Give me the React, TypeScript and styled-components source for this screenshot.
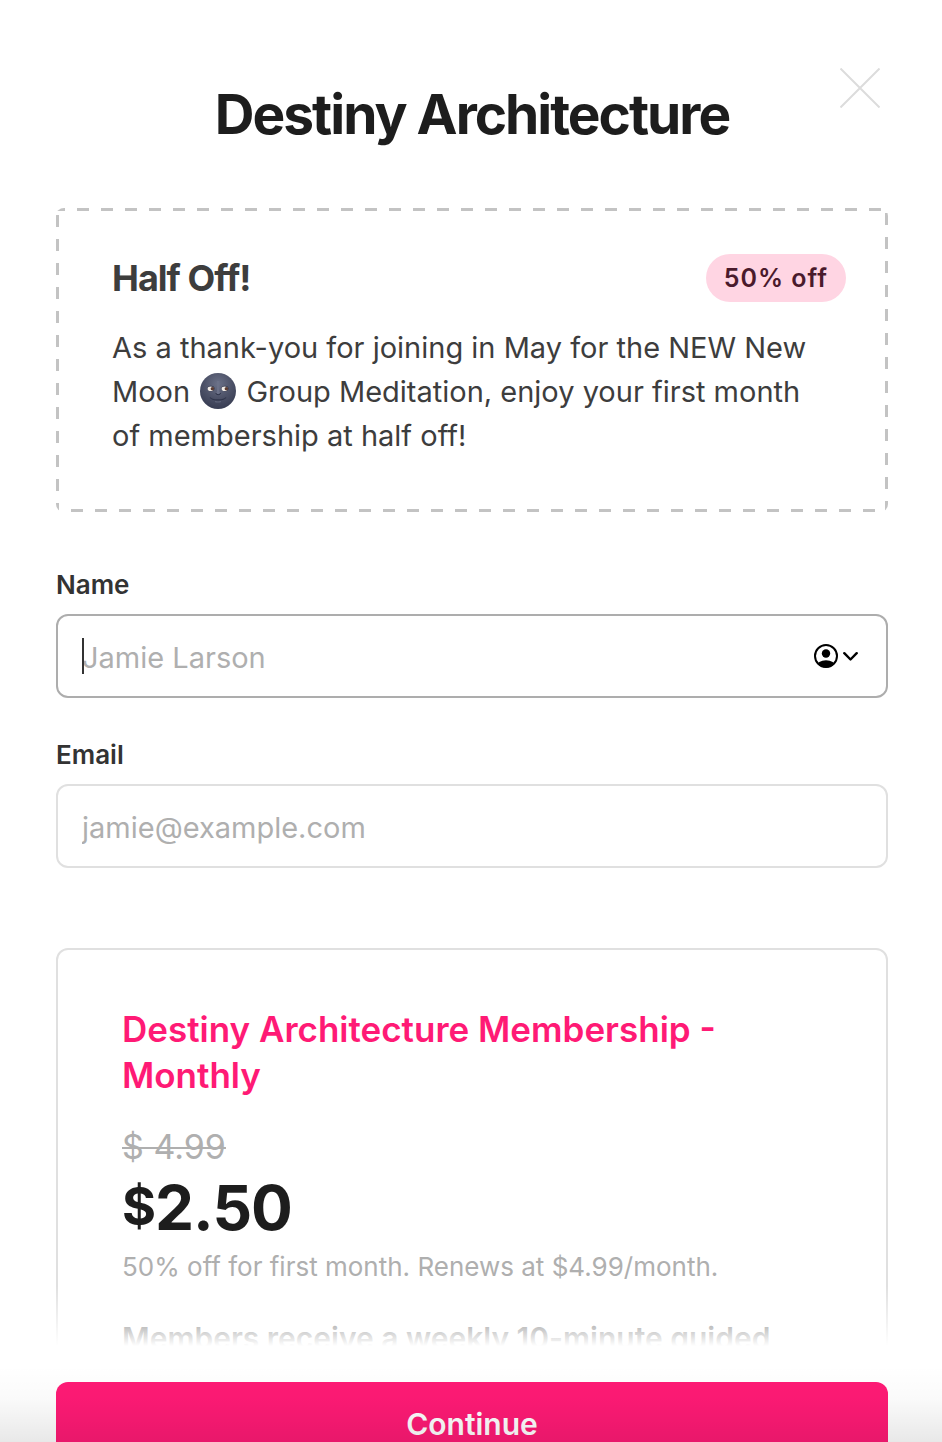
import React from 'react';
import styled, { createGlobalStyle } from 'styled-components';

const GlobalStyle = createGlobalStyle`
  *, *::before, *::after { box-sizing: border-box; }
  body {
    margin: 0;
    background: #fff;
    color: #3d3d3d;
    font-family: Inter, "Liberation Sans", sans-serif;
    font-size: 29px;
  }
  h1, h2, p { margin: 0; }
`;

const Page = styled.main`
  display: flex;
  flex-direction: column;
  height: 100vh;
  overflow: hidden;
`;

const ScrollArea = styled.div`
  flex: 1;
  min-height: 0;
  overflow-y: auto;
  scrollbar-width: none;
  padding: 82px 54px 0 56px;
`;

const Title = styled.h1`
  color: #1d1d1d;
  font-size: 55px;
  font-weight: 700;
  line-height: 64px;
  letter-spacing: -2px;
  text-align: center;
`;

const CloseButton = styled.button`
  position: absolute;
  top: 68px;
  right: 62px;
  width: 40px;
  height: 40px;
  padding: 0;
  border: 0;
  background: none;
  svg { display: block; }
`;

const dash = (angle: string) => `linear-gradient(${angle}, #c3c3c3 50%, transparent 50%)`;

const Offer = styled.section`
  margin-top: 62px;
  padding: 46px 42px 54px 56px;
  border-radius: 8px;
  background:
    ${dash('90deg')} -3px 0 / 24px 3px repeat-x,
    ${dash('90deg')} 15px 100% / 24px 3px repeat-x,
    ${dash('180deg')} 0 7px / 3px 24px repeat-y,
    ${dash('180deg')} 100% 5px / 3px 24px repeat-y;
`;

const OfferHeader = styled.div`
  display: flex;
  align-items: center;
  justify-content: space-between;
`;

const OfferTitle = styled.h2`
  font-size: 36px;
  font-weight: 700;
  line-height: 48px;
  letter-spacing: -1px;
`;

const Badge = styled.span`
  padding: 0 18px;
  border-radius: 24px;
  background: #ffd5e3;
  color: #4a1a2c;
  font-size: 25px;
  font-weight: 600;
  line-height: 48px;
  letter-spacing: 1px;
`;

const OfferText = styled.p`
  margin-top: 24px;
  padding-right: 24px;
  line-height: 44px;
`;

const MoonIcon = styled.svg`
  width: 36px;
  height: 36px;
  margin: 0 2px;
  vertical-align: -7px;
`;

const Form = styled.form`
  display: flex;
  flex-direction: column;
  gap: 41px;
  margin-top: 57px;
`;

const Field = styled.div`
  display: flex;
  flex-direction: column;
  gap: 13px;
`;

const Label = styled.label`
  color: #333;
  font-size: 26px;
  font-weight: 600;
  line-height: 32px;
`;

const InputWrap = styled.div`
  position: relative;
`;

const Input = styled.input<{ $active?: boolean }>`
  display: block;
  width: 100%;
  height: 84px;
  padding: 2px 24px 0;
  border: 2px solid ${(p) => (p.$active ? '#adadad' : '#e0e0e0')};
  border-radius: 12px;
  outline: 0;
  background: #fff;
  color: #333;
  font: inherit;
  &::placeholder { color: #afafaf; opacity: 1; }
`;

const Caret = styled.span`
  position: absolute;
  top: 24px;
  left: 26px;
  width: 2px;
  height: 36px;
  background: #333;
`;

const AutofillButton = styled.button`
  position: absolute;
  top: 28px;
  right: 30px;
  display: flex;
  padding: 0;
  border: 0;
  background: none;
`;

const Plan = styled.section`
  margin-top: 80px;
  padding: 56px 64px;
  border: 2px solid #e0e0e0;
  border-radius: 12px;
`;

const PlanTitle = styled.h2`
  color: #ff1a75;
  font-size: 35px;
  font-weight: 600;
  line-height: 46px;
`;

const OldPrice = styled.s`
  display: block;
  width: fit-content;
  margin-top: 26px;
  color: #afafaf;
  font-size: 34px;
  line-height: 46px;
  text-decoration-thickness: 2px;
`;

const Price = styled.p`
  color: #1d1d1d;
  font-size: 62px;
  font-weight: 700;
  line-height: 76px;
  letter-spacing: -1px;
`;

const Currency = styled.span`
  font-size: 52px;
  line-height: 52px;
  vertical-align: 5px;
`;

const PriceNote = styled.p`
  color: #afafaf;
  font-size: 26px;
  line-height: 42px;
`;

const PlanText = styled.p`
  margin-top: 28px;
  font-size: 30px;
  font-weight: 600;
  line-height: 44px;
`;

const Footer = styled.footer`
  position: relative;
  flex: none;
  height: 96px;
  padding: 36px 54px 0 56px;
  background: #fff;
  &::before {
    content: '';
    position: absolute;
    inset: -60px 0 auto;
    height: 60px;
    background: linear-gradient(rgba(255, 255, 255, 0), #fff);
    pointer-events: none;
  }
  &::after {
    content: '';
    position: absolute;
    inset: 0;
    background: linear-gradient(rgba(0, 0, 0, 0) 20%, rgba(0, 0, 0, 0.02) 55%, rgba(0, 0, 0, 0.09));
    pointer-events: none;
  }
`;

const ContinueButton = styled.button`
  display: block;
  width: 100%;
  height: 84px;
  border: 0;
  border-radius: 12px;
  background: #ff1a75;
  color: #fff;
  font: inherit;
  font-size: 30px;
  font-weight: 600;
`;

function NewMoonFace() {
  return (
    <MoonIcon viewBox="0 0 36 36" role="img" aria-label="New moon face">
      <defs>
        <radialGradient id="moon" cx="50%" cy="30%" r="70%">
          <stop offset="0" stopColor="#6b7188" />
          <stop offset="0.55" stopColor="#4d5268" />
          <stop offset="1" stopColor="#383d53" />
        </radialGradient>
      </defs>
      <circle cx="18" cy="18" r="18" fill="url(#moon)" />
      <path d="M17 8v10.500q-1.800 2.400 1.200 2.600q3-.2 1.200-2.600V8" fill="#6b7188" />
      <path d="M15.800 20q.2 1.800 2.400 1.700q2.200.1 2.400-1.700" fill="none" stroke="#2f344a" strokeWidth="1" />
      <ellipse cx="11" cy="15.500" rx="3.500" ry="2.700" fill="#33374b" />
      <ellipse cx="25" cy="15.500" rx="3.500" ry="2.700" fill="#33374b" />
      <ellipse cx="10.600" cy="15.700" rx="3" ry="2.300" fill="#f1ece6" />
      <ellipse cx="24.600" cy="15.700" rx="3" ry="2.300" fill="#f1ece6" />
      <circle cx="12.400" cy="15.700" r="1.800" fill="#5c3d33" />
      <circle cx="26.400" cy="15.700" r="1.800" fill="#5c3d33" />
      <path d="M10 24.500q2 2.500 8 2.300q6 .2 8-2.300" fill="none" stroke="#2f344a" strokeWidth="1.200" />
      <path d="M15 28.500q3 1 6 0" fill="none" stroke="#5f657b" strokeWidth="1.200" />
    </MoonIcon>
  );
}

function AccountIcon() {
  return (
    <svg width="46" height="28" viewBox="0 0 46 28" aria-hidden="true">
      <defs>
        <clipPath id="badge-clip"><circle cx="14" cy="14" r="11.500" /></clipPath>
      </defs>
      <circle cx="14" cy="14" r="11" fill="none" stroke="#000" strokeWidth="2" />
      <circle cx="14" cy="11.500" r="4.200" />
      <ellipse cx="14" cy="24.500" rx="9.500" ry="6.300" clipPath="url(#badge-clip)" />
      <path d="M32.300 11.200L38.500 17.500L44.700 11.200" fill="none" stroke="#000" strokeWidth="2.400" strokeLinecap="round" strokeLinejoin="round" />
    </svg>
  );
}

export default function App() {
  return (
    <Page>
      <GlobalStyle />
      <ScrollArea>
        <Title>Destiny Architecture</Title>
        <CloseButton type="button" aria-label="Close">
          <svg width="40" height="40" viewBox="0 0 40 40" fill="none" stroke="#dcdcdc" strokeWidth="2">
            <path d="M0.500 0.500L39.500 39.500M39.500 0.500L0.500 39.500" />
          </svg>
        </CloseButton>
        <Offer>
          <OfferHeader>
            <OfferTitle>Half Off!</OfferTitle>
            <Badge>50% off</Badge>
          </OfferHeader>
          <OfferText>
            As a thank-you for joining in May for the NEW New Moon <NewMoonFace /> Group Meditation,
            enjoy your first month of membership at half off!
          </OfferText>
        </Offer>
        <Form id="checkout">
          <Field>
            <Label htmlFor="name">Name</Label>
            <InputWrap>
              <Input id="name" type="text" placeholder="Jamie Larson" $active />
              <Caret />
              <AutofillButton type="button" aria-label="Autofill contact">
                <AccountIcon />
              </AutofillButton>
            </InputWrap>
          </Field>
          <Field>
            <Label htmlFor="email">Email</Label>
            <Input id="email" type="email" placeholder="jamie@example.com" />
          </Field>
        </Form>
        <Plan>
          <PlanTitle>Destiny Architecture Membership - Monthly</PlanTitle>
          <OldPrice>$ 4.99</OldPrice>
          <Price><Currency>$</Currency>2.50</Price>
          <PriceNote>50% off for first month. Renews at $4.99/month.</PriceNote>
          <PlanText>Members receive a weekly 10-minute guided</PlanText>
        </Plan>
      </ScrollArea>
      <Footer>
        <ContinueButton type="submit" form="checkout">Continue</ContinueButton>
      </Footer>
    </Page>
  );
}
